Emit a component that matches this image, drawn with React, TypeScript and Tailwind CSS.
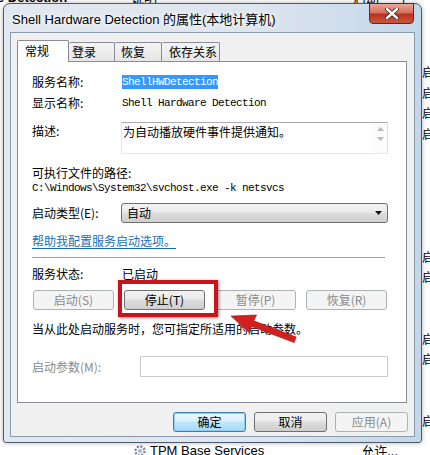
import React from "react";

const disBtn =
  "h-[20px] w-[81px] flex items-center justify-center text-[12px] leading-none rounded-[3px] border border-[#adb2b5] bg-[#f4f4f4] text-[#8a8a8a]";
const enBtn =
  "h-[20px] w-[81px] flex items-center justify-center text-[12px] leading-none rounded-[3px] border border-[#707070] bg-[linear-gradient(#f2f2f2,#ebebeb_45%,#dddddd_50%,#cfcfcf)] text-black";

function Gear() {
  return (
    <svg width="14" height="14" viewBox="0 0 14 14">
      <circle cx="7" cy="7" r="4.5" fill="none" stroke="#7a8a9a" strokeWidth="2.5" strokeDasharray="2 1.5" />
      <circle cx="7" cy="7" r="2" fill="#a7b6c4" />
    </svg>
  );
}

export default function App() {
  const rows = Array.from({ length: 18 }, (_, i) => i);
  const qi = new Set([0, 1, 2, 3, 9, 10, 13, 14, 17]);
  return (
    <div className="relative w-[430px] h-[455px] overflow-hidden bg-white text-black font-['Noto_Sans_CJK_SC','Noto_Sans',sans-serif]">
      {/* background list behind the dialog */}
      <div className="flex flex-col h-full">
        <div className="h-[4px] overflow-hidden flex text-[13px] leading-[13px]">
          <span className="mt-[-9px] ml-[-3px] font-bold font-['Liberation_Sans',sans-serif]">e Detection</span>
          <span className="mt-[-9px] ml-[64px]">说明</span>
          <span className="mt-[-9px] ml-[196px]">启动</span>
          <span className="mt-[-9px] ml-[18px]">手</span>
        </div>
        <div className="flex-1 min-h-0 overflow-hidden flex justify-end">
          <div className="w-[8px] overflow-hidden pt-[58px] flex flex-col">
            {rows.map((i) => (
              <div key={i} className="h-[20.5px] shrink-0 flex items-center text-[12px] whitespace-nowrap">
                {qi.has(i) ? "启" : ""}
              </div>
            ))}
          </div>
        </div>
        <div className="h-[13px] shrink-0 flex items-start pl-[133px]">
          <div className="mt-[2px]"><Gear /></div>
          <span className="ml-[3px] mt-[1px] text-[13px] leading-[15px] font-['Liberation_Sans',sans-serif]">TPM Base Services</span>
          <span className="ml-[97px] mt-[1px] text-[13px] leading-[15px]">允许...</span>
        </div>
      </div>

      {/* dialog window */}
      <div className="absolute left-[3px] top-[3px] w-[419px] h-[440px] rounded-t-[7px] rounded-b-[3px] border border-[#4c5a6a] bg-[linear-gradient(90deg,#e2e8ef,#dde5ee_60%,#c4d6ea)] shadow-[0_0_5px_rgba(0,0,0,0.3)] flex flex-col">
        {/* title bar */}
        <div className="relative h-[28px] flex items-center pl-[8px]">
          <span className="text-[13px] leading-none text-black font-['Liberation_Sans','Noto_Sans_CJK_SC',sans-serif] mt-[2px] [text-shadow:0_0_6px_#fff,0_0_4px_#fff]">
            Shell Hardware Detection 的属性(本地计算机)
          </span>
          <div className="absolute right-[7px] top-[-1px] w-[45px] h-[21px] rounded-b-[4px] border border-[#5a2a22] bg-[linear-gradient(#eba897,#d5705e_45%,#b8321f_55%,#cd563f)] flex items-center justify-center">
            <svg width="14" height="11" viewBox="0 0 14 11">
              <path d="M2 1 L12 10 M12 1 L2 10" stroke="#3a1a15" strokeWidth="4" strokeLinecap="round" />
              <path d="M2 1 L12 10 M12 1 L2 10" stroke="#ffffff" strokeWidth="2.4" strokeLinecap="round" />
            </svg>
          </div>
        </div>

        {/* client area */}
        <div className="mx-[6px] h-[405px] border border-[#8b9aab] bg-[#f0f0f0] flex flex-col pl-[6px] pr-[6px] pt-[7px]">
          {/* tabs */}
          <div className="h-[21px] flex items-end text-[12px] leading-none relative z-10">
            <div className="h-[22px] w-[52px] bg-white border border-b-0 border-[#898c95] rounded-t-[2px] flex items-center pl-[7px] mb-[-1px] pb-[1px]">常规</div>
            <div className="h-[19px] w-[46px] border border-l-0 border-b-0 border-[#898c95] rounded-t-[2px] bg-[linear-gradient(#f4f4f4,#e6e6e6)] flex items-center pl-[3px]">登录</div>
            <div className="h-[19px] w-[47px] border border-l-0 border-b-0 border-[#898c95] rounded-t-[2px] bg-[linear-gradient(#f4f4f4,#e6e6e6)] flex items-center pl-[6px]">恢复</div>
            <div className="h-[19px] w-[58px] border border-l-0 border-b-0 border-[#898c95] rounded-t-[2px] bg-[linear-gradient(#f4f4f4,#e6e6e6)] flex items-center pl-[7px]">依存关系</div>
          </div>

          {/* tab page */}
          <div className="h-[342px] w-[390px] bg-white border border-[#898c95] flex flex-col pl-[14px] text-[12px] leading-none">
            <div className="mt-[13px] h-[14px] flex items-center">
              <span className="w-[90px]">服务名称:</span>
              <span className="h-[14px] bg-[#3399ff] text-white flex items-center font-['Liberation_Mono',monospace] text-[11px] tracking-[-0.6px]">ShellHWDetection</span>
            </div>
            <div className="mt-[7px] h-[14px] flex items-center">
              <span className="w-[90px]">显示名称:</span>
              <span className="font-['Liberation_Mono',monospace] text-[11px] tracking-[-0.6px]">Shell Hardware Detection</span>
            </div>
            <div className="mt-[12px] h-[32px] flex items-start">
              <span className="w-[89px] mt-[3px]">描述:</span>
              <div className="w-[267px] h-[32px] border border-[#abadb3] border-l-[#e2e3ea] border-r-[#dbdfe6] border-b-[#e3e9ef] flex justify-between pl-[1px] pt-[3px]">
                <span>为自动播放硬件事件提供通知。</span>
                <div className="w-[14px] flex flex-col items-center pt-[4px] gap-[6px] mt-[-3px] bg-[#fbfbfb]">
                  <svg width="7" height="4" viewBox="0 0 7 4"><path d="M0 4 L3.5 0 L7 4Z" fill="#b9b9b9" /></svg>
                  <svg width="7" height="4" viewBox="0 0 7 4"><path d="M0 0 L3.5 4 L7 0Z" fill="#b9b9b9" /></svg>
                </div>
              </div>
            </div>
            <div className="mt-[12px] h-[14px] flex items-center">可执行文件的路径:</div>
            <div className="mt-[1px] h-[14px] flex items-center font-['Liberation_Mono',monospace] text-[11px] tracking-[-0.6px]">C:\Windows\System32\svchost.exe -k netsvcs</div>
            <div className="mt-[8px] h-[20px] flex items-center">
              <span className="w-[89px]">启动类型(E):</span>
              <div className="w-[267px] h-[20px] rounded-[3px] border border-[#707070] bg-[linear-gradient(#f2f2f2,#ebebeb_45%,#dddddd_50%,#cfcfcf)] flex items-center justify-between pl-[5px] pr-[5px]">
                <span>自动</span>
                <svg width="7" height="4" viewBox="0 0 7 4"><path d="M0 0 L3.5 4 L7 0Z" fill="#111" /></svg>
              </div>
            </div>
            <div className="mt-[11px] h-[14px] flex items-center">
              <span className="text-[#1d6cb3] underline underline-offset-[2px]">帮助我配置服务启动选项。</span>
            </div>
            <div className="mt-[9px] h-px w-[353px] bg-[#a0a0a0]" />
            <div className="mt-[9px] h-[14px] flex items-center">
              <span className="w-[90px]">服务状态:</span>
              <span>已启动</span>
            </div>
            <div className="mt-[9px] h-[20px] flex gap-[10px] ml-[1px]">
              <div className={disBtn}>启动(S)</div>
              <div className={enBtn}>停止(T)</div>
              <div className={disBtn}>暂停(P)</div>
              <div className={disBtn}>恢复(R)</div>
            </div>
            <div className="mt-[12px] h-[14px] flex items-center">当从此处启动服务时，您可指定所适用的启动参数。</div>
            <div className="mt-[20px] h-[21px] flex items-center">
              <span className="w-[108px] text-[#8a8a8a]">启动参数(M):</span>
              <div className="w-[248px] h-[21px] border border-[#c9cbd0]" />
            </div>
          </div>

          {/* bottom buttons */}
          <div className="mt-[9px] flex justify-end gap-[8px] text-[12px] leading-none">
            <div className="h-[20px] w-[73px] flex items-center justify-center rounded-[3px] border border-[#3c7fb1] bg-[linear-gradient(#eaf6fd,#d9f0fc_45%,#bee6fd_50%,#a7d9f5)] shadow-[inset_0_0_0_1px_#8fd0f2]">确定</div>
            <div className="h-[20px] w-[73px] flex items-center justify-center rounded-[3px] border border-[#707070] bg-[linear-gradient(#f2f2f2,#ebebeb_45%,#dddddd_50%,#cfcfcf)]">取消</div>
            <div className="h-[20px] w-[73px] flex items-center justify-center rounded-[3px] border border-[#adb2b5] bg-[#f4f4f4] text-[#8a8a8a]">应用(A)</div>
          </div>
        </div>
      </div>

      {/* red highlight box */}
      <div className="absolute left-[118px] top-[280px] w-[100px] h-[37px] border-[4px] border-[#c8141c] shadow-[1px_1px_3px_rgba(0,0,0,0.45)]" />

      {/* red arrow */}
      <svg className="absolute left-0 top-0 pointer-events-none" width="430" height="455" viewBox="0 0 430 455">
        <polygon
          points="231,316 256.5,315 253.8,320.8 296.2,337 294.2,342.6 251.5,326.6 249,332.5"
          fill="#d21f1f"
          stroke="#a01010"
          strokeWidth="0.6"
        />
      </svg>
    </div>
  );
}
